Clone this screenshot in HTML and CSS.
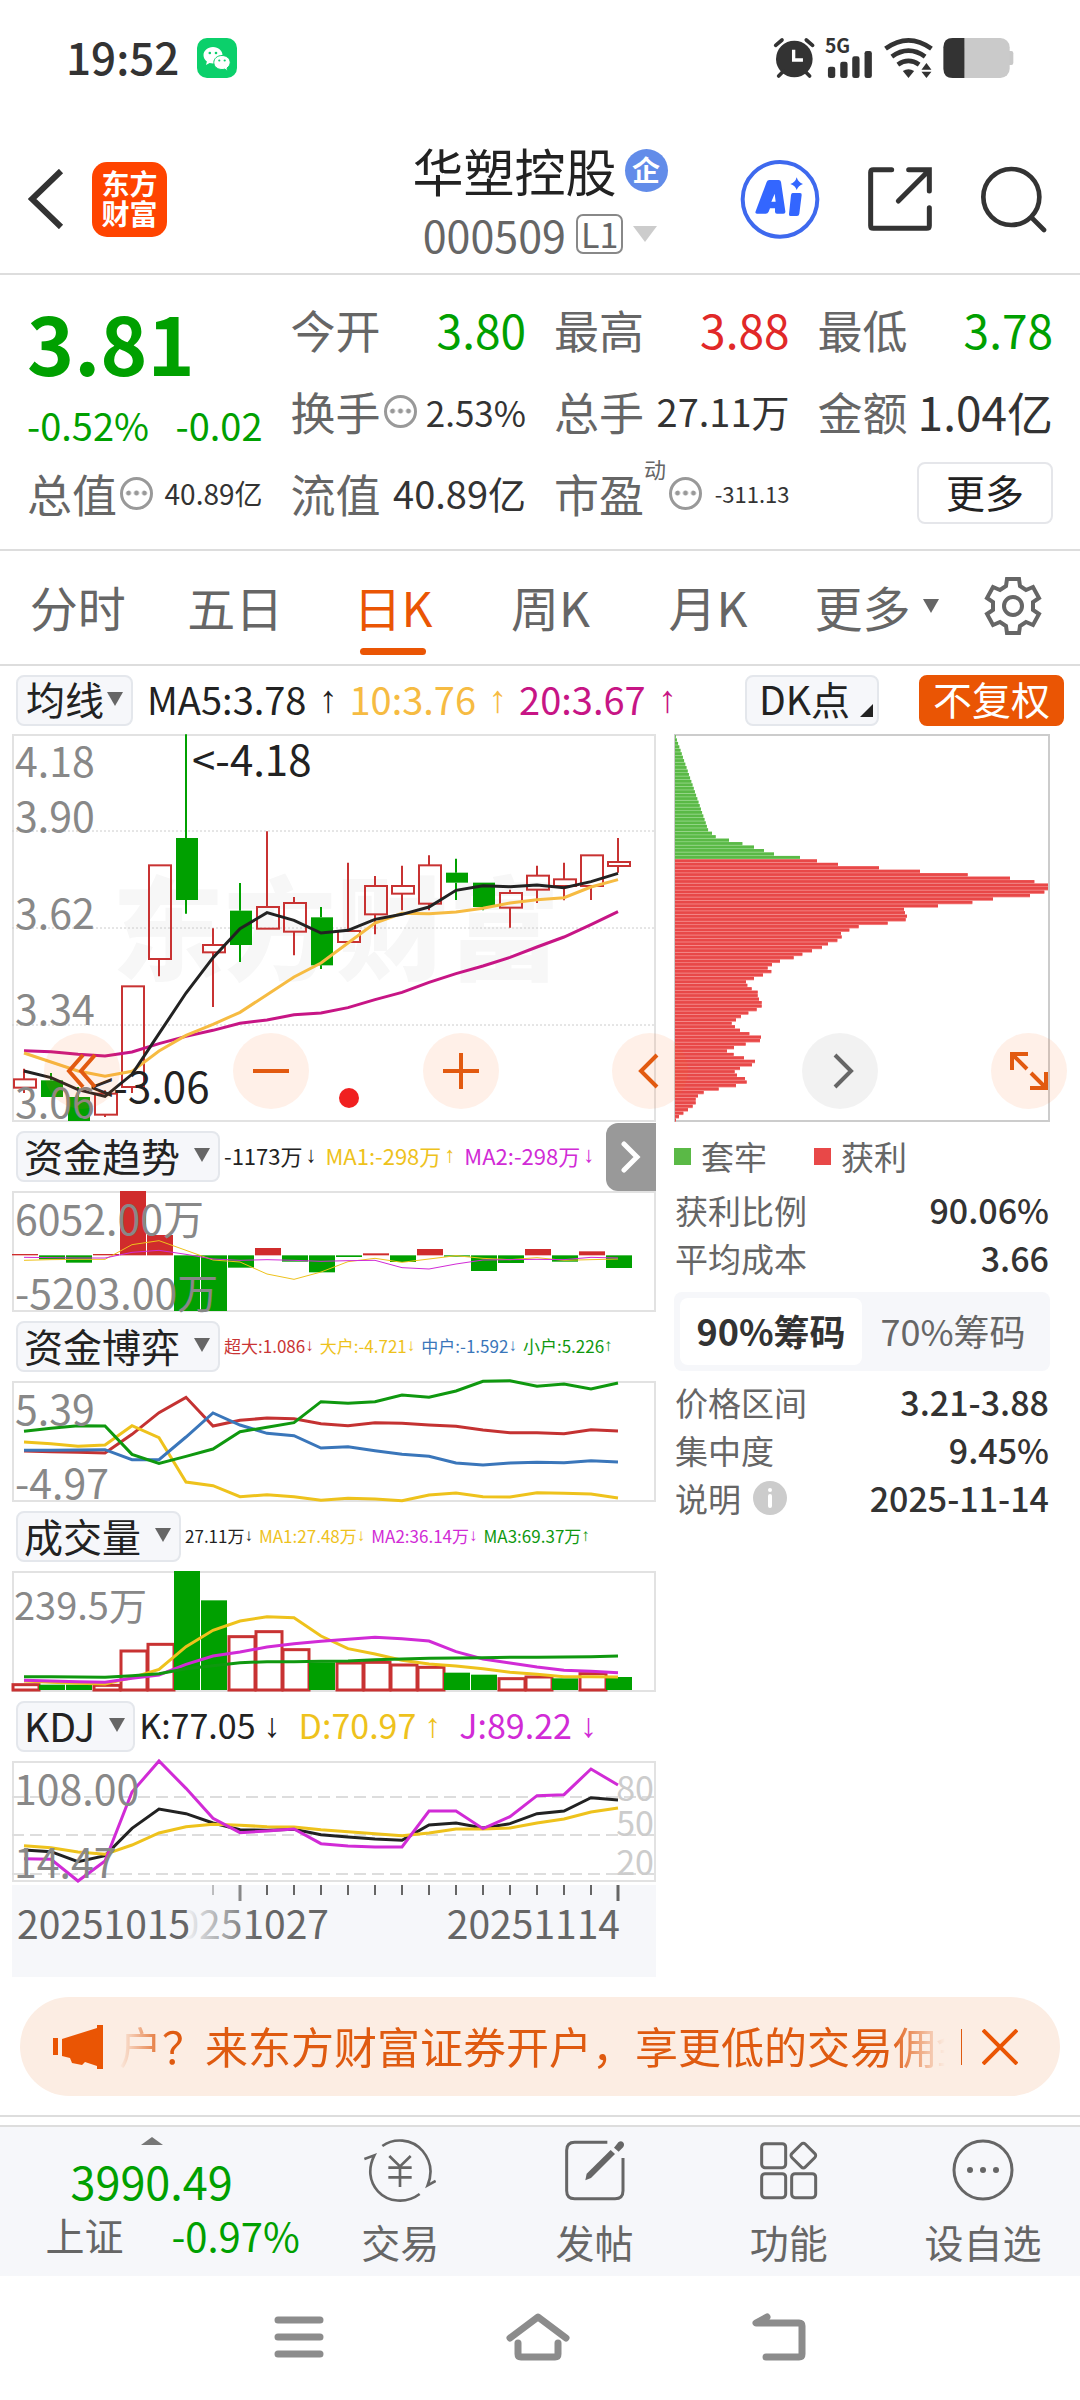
FILE: index.html
```html
<!DOCTYPE html>
<html lang="zh-CN">
<head>
<meta charset="utf-8">
<meta name="viewport" content="width=device-width, initial-scale=1">
<title>华塑控股 000509</title>
<link rel="stylesheet" href="styles.css">
</head>
<body>
<div class="status">
  <time class="clock">19:52</time>
  <svg class="wechat" viewBox="0 0 40 40" aria-hidden="true">
    <rect width="40" height="40" rx="10" fill="#0bd06b"/>
    <path d="M16 9c-5.500 0-9.500 3.700-9.500 8.200 0 2.600 1.300 4.800 3.400 6.300l-.9 3.400 3.600-2c1.100.3 2.200.5 3.400.5 5.400 0 9.500-3.700 9.500-8.200S21.500 9 16 9z" fill="#fff"/>
    <path d="M25 17.500c-4.700 0-8.200 3.100-8.200 7s3.500 7 8.200 7c.9 0 1.800-.1 2.600-.4l3.200 1.800-.8-2.900c1.900-1.300 3.200-3.300 3.200-5.500 0-3.900-3.600-7-8.200-7z" fill="#fff" stroke="#0bd06b"/>
    <g fill="#0bd06b"><circle cx="12.800" cy="15" r="1.300"/><circle cx="19" cy="15" r="1.300"/><circle cx="22.300" cy="22.500" r="1.100"/><circle cx="27.700" cy="22.500" r="1.100"/></g>
  </svg>
  <svg class="signals" viewBox="400 48 724 126" aria-hidden="true">
    <g fill="#333">
      <circle cx="464" cy="114" r="55"/>
      <g stroke="#333" stroke-width="11" stroke-linecap="round"><path d="M408 73l19-16M519 73l-19-16"/><path d="M417 165l14-14M510 165l-14-14"/></g>
      <path d="M462 86v31h28" fill="none" stroke="#fff" stroke-width="10"/>
      <text x="556" y="97" class="net">5G</text>
      <rect x="565" y="137" width="22" height="34" rx="7"/><rect x="602" y="122" width="22" height="49" rx="7"/><rect x="638" y="106" width="22" height="65" rx="7"/><rect x="675" y="90" width="22" height="81" rx="7"/>
      <g fill="none" stroke="#333" stroke-width="14"><path d="M738 83q69-50 138 0"/><path d="M757 107q50-36 100 0"/><path d="M775 131q32-22 64 0"/></g>
      <path d="M790 150q17-11 34 0l-17 21z"/><path d="M846 146l15-20 15 20zM846 152h30l-15 19z"/>
    </g>
    <path d="M1108 90h8q6 0 6 7v28q0 7-6 7h-8z" fill="#c8c8c8"/>
    <rect x="912" y="51" width="199" height="120" rx="28" fill="#cacaca"/>
    <path d="M940 51h35v120h-35q-28 0-28-28V79q0-28 28-28z" fill="#333"/>
  </svg>
</div>

<header class="header">
  <div class="side">
    <button class="bare" aria-label="返回"><svg width="36" height="60" viewBox="0 0 36 60"><path d="M33 2L4 30l29 28" fill="none" stroke="#333" stroke-width="6"/></svg></button>
    <a class="logo" href="#">东方<br>财富</a>
  </div>
  <div class="heading">
    <h1>华塑控股<span class="badge">企</span></h1>
    <p>000509<span class="level">L1</span><svg width="24" height="16" viewBox="0 0 24 16"><path d="M0 0h24L12 16z" fill="#ccc"/></svg></p>
  </div>
  <div class="side actions">
    <button class="bare" aria-label="Ai"><svg width="80" height="80" viewBox="300 416 240 240">
      <circle cx="420" cy="537" r="112" fill="none" stroke="#3e69ee" stroke-width="12"/>
      <path d="M380 485q2-6 8-6h28q6 0 7 6l13 88q1 7-6 7h-19q-6 0-6-6v-10h-15l-4 10q-3 6-9 6h-26q-7 0-4-7zM394 544h13l-3-24z" fill="#3366ff" fill-rule="evenodd"/>
      <path d="M458 518h22q6 0 5 6l-7 56q-1 7-7 7h-20q-5 0-4-6l6-57q1-6 5-6zM470 471q5 16 19 20-14 5-19 18-4-13-19-18 15-4 19-20z" fill="#3366ff"/>
    </svg></button>
    <button class="bare" aria-label="分享"><svg width="66" height="66" viewBox="678 438 198 198" fill="none" stroke="#333" stroke-width="15" stroke-linecap="round"><path d="M752 449h-55q-8 0-8 8v160q0 8 8 8h160q8 0 8-8v-54"/><path d="M803 449h62v64M772 543l90-90"/></svg></button>
    <button class="bare" aria-label="搜索"><svg width="67" height="67" viewBox="1022 434 201 201" fill="none" stroke="#333" stroke-width="14" stroke-linecap="round"><circle cx="1116" cy="527" r="84"/><path d="M1178 590l36 36"/></svg></button>
  </div>
</header>

<section class="quote">
  <div class="price">
    <strong>3.81</strong>
    <div class="change"><span>-0.52%</span><span>-0.02</span></div>
  </div>
  <div class="item"><span>今开</span><b class="xl down">3.80</b></div>
  <div class="item"><span>最高</span><b class="xl up">3.88</b></div>
  <div class="item"><span>最低</span><b class="xl down">3.78</b></div>
  <div class="item"><span>换手<i class="dots"></i></span><b class="md">2.53%</b></div>
  <div class="item"><span>总手</span><b class="lg">27.11万</b></div>
  <div class="item"><span>金额</span><b class="xl">1.04亿</b></div>
  <div class="item"><span>总值<i class="dots"></i></span><b class="sm">40.89亿</b></div>
  <div class="item"><span>流值</span><b class="lg">40.89亿</b></div>
  <div class="item"><span>市盈<sup>动</sup><i class="dots"></i></span><b class="xs">-311.13</b></div>
  <div class="item end"><button class="more">更多</button></div>
</section>

<nav class="tabs">
  <button>分时</button><button>五日</button><button class="on">日K</button><button>周K</button><button>月K</button>
  <button>更多<svg width="16" height="14" viewBox="0 0 16 14"><path d="M0 0h16L8 14z" fill="#666"/></svg></button>
  <button class="gear" aria-label="设置"><svg width="60" height="60" viewBox="-30 -30 60 60" fill="none" stroke="#666" stroke-width="4"><path d="M-6-27H6L7-20 13-16 20-19 26-8 20-4V4L26 8 20 19 13 16 7 20 6 27H-6L-7 20-13 16-20 19-26 8-20 4V-4L-26-8-20-19-13-16-7-20z"/><circle r="9"/></svg></button>
</nav>

<section class="indicators">
  <button class="chip tight">均线<svg width="16" height="14" viewBox="0 0 16 14"><path d="M0 0h16L8 14z" fill="#666"/></svg></button>
  <div class="ma"><span>MA5:3.78<i>↑</i></span><span class="c-amber">10:3.76<i>↑</i></span><span class="c-rose">20:3.67<i>↑</i></span></div>
  <button class="chip dk">DK点<svg width="13" height="13" viewBox="0 0 13 13"><path d="M13 0v13H0z" fill="#222"/></svg></button>
  <button class="chip solid">不复权</button>
</section>

<main class="charts">
  <div class="left">
    <svg id="kline" class="plot" viewBox="0 0 644 388"></svg>
    <div class="sub"><button class="chip">资金趋势<svg width="16" height="14" viewBox="0 0 16 14"><path d="M0 0h16L8 14z" fill="#666"/></svg></button>
      <div class="vals v-trend"><span>-1173万<i>↓</i></span><span class="c-gold">MA1:-298万<i>↑</i></span><span class="c-pink">MA2:-298万<i>↓</i></span></div>
      <button class="next" aria-label="下一组"><svg width="20" height="32" viewBox="0 0 20 32"><path d="M3 3l13 13L3 29" fill="none" stroke="#fff" stroke-width="5" stroke-linecap="round"/></svg></button></div>
    <svg id="trend" class="plot" viewBox="0 0 644 121"></svg>
    <div class="sub"><button class="chip">资金博弈<svg width="16" height="14" viewBox="0 0 16 14"><path d="M0 0h16L8 14z" fill="#666"/></svg></button>
      <div class="vals v-small"><span class="c-red">超大:1.086<i>↓</i></span><span class="c-gold">大户:-4.721<i>↓</i></span><span class="c-blue">中户:-1.592<i>↓</i></span><span class="c-green">小户:5.226<i>↑</i></span></div></div>
    <svg id="game" class="plot" viewBox="0 0 644 121"></svg>
    <div class="sub"><button class="chip">成交量<svg width="16" height="14" viewBox="0 0 16 14"><path d="M0 0h16L8 14z" fill="#666"/></svg></button>
      <div class="vals v-small"><span>27.11万<i>↓</i></span><span class="c-gold">MA1:27.48万<i>↓</i></span><span class="c-pink">MA2:36.14万<i>↓</i></span><span class="c-green">MA3:69.37万<i>↑</i></span></div></div>
    <svg id="volume" class="plot" viewBox="0 0 644 121"></svg>
    <div class="sub"><button class="chip">KDJ<svg width="16" height="14" viewBox="0 0 16 14"><path d="M0 0h16L8 14z" fill="#666"/></svg></button>
      <div class="vals v-kdj"><span>K:77.05<i>↓</i></span><span class="c-gold">D:70.97<i>↑</i></span><span class="c-pink">J:89.22<i>↓</i></span></div></div>
    <svg id="kdj" class="plot" viewBox="0 0 644 121"></svg>
    <svg id="axis" class="plot axis" viewBox="0 0 644 92"></svg>
  </div>

  <aside class="right">
    <svg id="chips" class="plot" viewBox="0 0 376 388"></svg>
    <div class="legend"><span class="key k-green">套牢</span><span class="key k-red">获利</span></div>
    <dl class="facts"><div><dt>获利比例</dt><dd>90.06%</dd></div><div><dt>平均成本</dt><dd>3.66</dd></div></dl>
    <div class="toggle"><button class="on">90%筹码</button><button>70%筹码</button></div>
    <dl class="facts"><div><dt>价格区间</dt><dd>3.21-3.88</dd></div><div><dt>集中度</dt><dd>9.45%</dd></div>
      <div><dt>说明<svg width="34" height="34" viewBox="0 0 34 34"><circle cx="17" cy="17" r="17" fill="#ccc"/><path d="M17 15v10" stroke="#fff" stroke-width="4" stroke-linecap="round"/><circle cx="17" cy="9" r="2" fill="#fff"/></svg></dt><dd>2025-11-14</dd></div></dl>
  </aside>

  <div class="tools">
    <button aria-label="快退"><svg width="34" height="36" viewBox="0 0 34 36"><path d="M18 2L4 18l14 16M30 2L16 18l14 16"/></svg></button>
    <button aria-label="缩小"><svg width="38" height="38" viewBox="0 0 38 38"><path d="M1 19h36"/></svg></button>
    <button aria-label="放大"><svg width="38" height="38" viewBox="0 0 38 38"><path d="M1 19h36M19 1v36"/></svg></button>
    <button aria-label="左移"><svg width="34" height="36" viewBox="0 0 34 36"><path d="M24 2L8 18l16 16"/></svg></button>
    <button class="grey" aria-label="右移"><svg width="34" height="36" viewBox="0 0 34 36"><path d="M12 2l16 16-16 16"/></svg></button>
    <button aria-label="全屏"><svg width="38" height="38" viewBox="0 0 38 38"><path d="M2 18V2h16M3 3l14 14M36 20v16H20M35 35L21 21"/></svg></button>
  </div>
</main>

<section class="notice">
  <svg width="50" height="44" viewBox="0 0 50 44" fill="#ea5504"><path d="M0 13h5v17H0zM9 14L44 3V0h6v44h-6v-3l-12-4-3 3-10-2-2-5-8-2z"/></svg>
  <p>户？来东方财富证券开户，享更低的交易佣金</p>
  <button class="bare close" aria-label="关闭"><svg width="36" height="36" viewBox="0 0 36 36"><path d="M1 1l34 34M35 1L1 35" stroke="#ea5504" stroke-width="4"/></svg></button>
</section>

<nav class="dock">
  <a class="index" href="#"><svg width="22" height="8" viewBox="0 0 22 8"><path d="M11 0l11 8H0z" fill="#777"/></svg><b>3990.49</b><span><em>上证</em>-0.97%</span></a>
  <a href="#"><svg viewBox="72 42 216 198" width="72" height="66" fill="none" stroke="#666" stroke-width="8"><path d="M127 69C160 45 215 45 248 84c25 30 30 65 15 103l24-13M239 213c-40 30-95 25-125-8C87 175 84 135 103 97l-30 11"/><path d="M148 99l32 31 32-31M145 134h70M145 163h70M180 130v62"/></svg>交易</a>
  <a href="#"><svg viewBox="666 42 198 198" width="66" height="66" fill="none" stroke="#666" stroke-width="9"><path d="M802 58H704q-24 0-24 24v121q0 24 24 24h121q24 0 24-24v-98"/><path d="M736 172l4-20 72-71 13 12-72 72z" fill="#666" stroke="none"/><path d="M822 74l13-16q10-7 16 2 3 6-1 12l-14 14z" fill="#666" stroke="none"/></svg>发帖</a>
  <a href="#"><svg viewBox="1248 42 198 198" width="66" height="66" fill="none" stroke="#666" stroke-width="9"><rect x="1265" y="62" width="72" height="72" rx="10"/><rect x="1265" y="152" width="72" height="72" rx="10"/><rect x="1355" y="152" width="72" height="72" rx="10"/><rect x="1362" y="69" width="57" height="57" rx="8" transform="rotate(45 1390 97)"/></svg>功能</a>
  <a href="#"><svg viewBox="0 0 66 66" width="66" height="66"><circle cx="33" cy="33" r="29" fill="none" stroke="#666" stroke-width="3"/><g fill="#666"><circle cx="20" cy="33" r="3"/><circle cx="33" cy="33" r="3"/><circle cx="46" cy="33" r="3"/></g></svg>设自选</a>
</nav>

<nav class="system">
  <button class="bare" aria-label="菜单"><svg width="50" height="50" viewBox="0 0 50 50"><path d="M4 8h42M4 25h42M4 42h42" stroke="#8c8c8c" stroke-width="7" stroke-linecap="round"/></svg></button>
  <button class="bare" aria-label="主页"><svg width="64" height="50" viewBox="0 0 64 50" fill="none" stroke="#8c8c8c" stroke-width="7" stroke-linecap="round" stroke-linejoin="round"><path d="M4 26L32 5l28 21M12 31v11q0 3 3 3h34q3 0 3-3V31"/></svg></button>
  <button class="bare" aria-label="后退"><svg width="54" height="50" viewBox="0 0 54 50" fill="none" stroke="#8c8c8c" stroke-width="7" stroke-linecap="round" stroke-linejoin="round"><path d="M15 5L4 11h43q3 0 3 3v28q0 3-3 3H14"/></svg></button>
</nav>
<script src="charts.js"></script>
</body>
</html>
```

FILE: styles.css
```css
* { box-sizing: border-box; }

body {
  margin: 0;
  background: #fff;
  color: #222;
  font-family: "Noto Sans CJK SC", "Noto Sans", sans-serif;
  font-size: 39px;
  line-height: 1;
}

button { border: 0; padding: 0; margin: 0; background: none; font: inherit; color: inherit; }
h1, p, dl, dd { margin: 0; }
svg { display: block; flex: none; }
a { color: inherit; text-decoration: none; }
i, em { font-style: normal; }
.bare { display: block; }

/* status bar */
.status { display: flex; align-items: center; height: 115px; padding: 0 66px; }
.clock { padding-bottom: 3px; font-size: 44px; font-weight: 500; color: #333; }
.wechat { width: 40px; height: 40px; margin-left: 18px; }
.signals { width: 241px; height: 42px; margin-left: auto; overflow: visible; }
.net { font-size: 58px; font-weight: 700; }

/* header */
.header { display: grid; grid-template-columns: 1fr auto 1fr; align-items: center; border-bottom: 2px solid #ddd; }
.side { display: flex; align-items: center; padding: 10px 33px 0 28px; gap: 28px; }
.actions { justify-content: flex-end; gap: 47px; }
.logo { width: 75px; height: 75px; padding-top: 6px; border-radius: 15px; background: #ff4400; color: #fff; font-size: 28px; font-weight: 700; line-height: 30px; text-align: center; }
.heading { padding: 23px 0 7px; text-align: center; }
.heading h1, .heading p { display: flex; align-items: center; justify-content: center; height: 64px; }
.heading h1 { font-size: 51px; font-weight: 400; gap: 8px; }
.badge { width: 43px; height: 43px; border-radius: 50%; background: #628ce9; color: #fff; font-size: 28px; font-weight: 700; line-height: 41px; text-align: center; }
.heading p { font-size: 43px; color: #666; gap: 10px; }
.level { height: 40px; padding: 0 3px; border: 2px solid #888; border-radius: 7px; font-size: 34px; line-height: 36px; }

/* quote */
.quote { display: grid; grid-template-columns: repeat(4, 1fr); grid-auto-rows: 82px; column-gap: 28px; padding: 13px 27px 15px; border-bottom: 2px solid #ddd; }
.price { grid-row: span 2; color: #00a000; }
.price strong { display: block; padding-top: 13px; font-size: 80px; font-weight: 700; line-height: 80px; }
.change { display: flex; justify-content: space-between; padding-top: 25px; font-size: 38px; }
.item { display: flex; align-items: center; justify-content: space-between; white-space: nowrap; }
.item span { display: flex; align-items: center; color: #666; font-size: 45px; }
.item b { color: #333; font-weight: 400; }
.item sup { align-self: flex-start; margin-top: -14px; font-size: 22px; line-height: 22px; }
.item .xl { font-size: 46px; }
.item .lg { font-size: 38px; }
.item .md { font-size: 35px; }
.item .sm { font-size: 28px; }
.item .xs { font-size: 22px; }
.item .down { color: #00a000; }
.item .up { color: #e12828; }
.end { justify-content: flex-end; }
.dots { width: 33px; height: 33px; margin-left: 3px; border: 3px solid #999; border-radius: 50%; background: radial-gradient(circle, #999 2px, transparent 3px) center / 8px 8px content-box repeat-x; padding: 9px 2px; }
.more { width: 136px; height: 62px; padding-bottom: 4px; border: 2px solid #e5e6ea; border-radius: 8px; color: #222; font-size: 39px; }

/* period tabs */
.tabs { display: grid; grid-template-columns: repeat(5, 158fr) 180fr 113fr; height: 115px; border-bottom: 2px solid #ddd; color: #666; font-size: 48px; }
.tabs button { position: relative; display: flex; align-items: center; justify-content: center; gap: 12px; padding: 0 2px 3px 0; }
.tabs .on { color: #ea5504; }
.tabs .on::after { content: ""; position: absolute; bottom: 9px; left: calc(50% - 34px); width: 66px; height: 7px; border-radius: 4px; background: #ea5504; }
.tabs .gear { justify-content: flex-start; padding-left: 16px; }

/* indicator row */
.indicators { display: flex; align-items: center; height: 68px; padding: 0 16px; }
.chip { display: flex; align-items: center; height: 51px; padding: 0 8px 3px 6px; gap: 14px; border: 2px solid #e4e7ec; border-radius: 8px; background: #f6f7fa; white-space: nowrap; }
.tight { padding: 0 8px 3px; gap: 3px; }
.ma { display: flex; gap: 12px; margin-left: 14px; padding-bottom: 3px; font-size: 38px; }
.ma span, .vals span { display: flex; align-items: center; white-space: nowrap; }
.ma i, .vals i { font-family: "Liberation Sans", sans-serif; }
.ma i { margin-left: 12px; }
.dk { margin-left: auto; padding: 0 4px 3px 12px; gap: 10px; }
.dk svg { margin-top: 24px; }
.solid { margin-left: 40px; padding: 0 12px 3px; border-color: #ea5504; background: #ea5504; color: #fff; }

.c-amber { color: #f6bb42; }
.c-rose { color: #c71585; }
.c-gold { color: #eec21c; }
.c-pink { color: #d12bd6; }
.c-red { color: #c93434; }
.c-blue { color: #3a76ba; }
.c-green { color: #0f980f; }

/* charts */
.charts { position: relative; display: grid; grid-template-columns: minmax(0, 644fr) minmax(0, 376fr); column-gap: 18px; padding: 0 30px 0 12px; }
.plot { width: 100%; height: auto; overflow: visible; }
.axis { margin-top: 3px; background: #f6f7fa; }
.label { font-size: 41px; fill: #888; }
.narrow-label { font-size: 38px; fill: #888; }
.mark { font-size: 42px; fill: #222; }
.level-label { font-size: 34px; fill: #ccc; }
.date { font-size: 39px; fill: #666; }
.watermark { font-size: 112px; font-weight: 900; fill: #f7f7f7; }

.sub { display: flex; align-items: center; height: 69px; padding-left: 4px; }
.vals { display: flex; margin-left: 4px; padding-bottom: 3px; }
.v-trend { font-size: 22px; gap: 9px; }
.v-trend i { margin-left: 3px; }
.v-small { font-size: 17px; gap: 6px; }
.v-kdj { font-size: 34px; gap: 18px; }
.v-kdj i { margin-left: 8px; }
.next { display: flex; align-items: center; justify-content: center; width: 50px; height: 68px; margin-left: auto; border-radius: 12px 0 0 12px; background: #999; }

.legend { display: flex; gap: 47px; height: 69px; align-items: center; color: #666; font-size: 33px; }
.key { display: flex; align-items: center; gap: 10px; }
.key::before { content: ""; width: 17px; height: 17px; }
.k-green::before { background: #5ab946; }
.k-red::before { background: #e84848; }
.facts { font-size: 33px; padding: 0 1px; }
.facts div { display: flex; align-items: center; justify-content: space-between; height: 48px; }
.facts dt { display: flex; align-items: center; gap: 12px; color: #666; }
.facts dd { color: #333; font-size: 34px; font-weight: 500; }
.legend + .facts { margin-top: -5px; }
.toggle { display: grid; grid-template-columns: 1fr 1fr; height: 79px; margin: 10px 0 7px; padding: 6px; border-radius: 8px; background: #f6f7fa; color: #666; font-size: 36px; }
.toggle button { padding-bottom: 4px; }
.toggle .on { border-radius: 8px; background: #fff; color: #333; font-weight: 700; }

.tools { position: absolute; top: 299px; left: 44px; right: 13px; display: flex; justify-content: space-between; }
.tools button { display: flex; align-items: center; justify-content: center; width: 76px; height: 76px; border-radius: 50%; background: rgba(252, 110, 30, 0.1); }
.tools svg { fill: none; stroke: #e25a10; stroke-width: 4; }
.tools .grey { background: rgba(0, 0, 0, 0.05); }
.tools .grey svg { stroke: #666; }

/* notice */
.notice { display: flex; align-items: center; height: 99px; margin: 20px 20px 19px; padding: 0 42px 0 33px; border-radius: 50px; background: #fcede3; color: #df5a10; }
.notice p { flex: 1; min-width: 0; margin-left: 16px; padding-bottom: 4px; overflow: hidden; font-size: 43px; line-height: 60px; white-space: nowrap; -webkit-mask-image: linear-gradient(90deg, transparent, #000 50px, #000 calc(100% - 55px), transparent); mask-image: linear-gradient(90deg, transparent, #000 50px, #000 calc(100% - 55px), transparent); }
.close { margin-left: 16px; padding-left: 20px; border-left: 1px solid #df5a10; }

/* bottom bar */
.dock { display: grid; grid-template-columns: 303fr repeat(4, 194fr); height: 161px; border-top: 2px solid #ddd; padding-top: 10px; background: linear-gradient(#fff 8px, #ddd 8px, #ddd 10px, #f6f7fa 10px); color: #666; }
.dock a { display: flex; flex-direction: column; align-items: center; gap: 19px; padding-top: 10px; font-size: 39px; }
.dock .index { gap: 0; color: #00a000; }
.index b { margin-top: 13px; font-size: 45px; font-weight: 400; }
.index span { display: flex; gap: 48px; margin-top: 12px; padding-left: 42px; font-size: 40px; }
.index em { color: #666; font-size: 39px; }

.system { display: flex; align-items: center; justify-content: center; gap: 182px; height: 122px; }
```

FILE: charts.js
```js
// Series hold screen rows in thirds of a pixel, counted down from each panel's origin.
const STEP = 27;
const RED = '#c83232';
const GREEN = '#00a000';
const x = i => 12 + STEP * i;

function add(svg, tag, attrs, text) {
  const el = document.createElementNS('http://www.w3.org/2000/svg', tag);
  for (const key in attrs) el.setAttribute(key, attrs[key]);
  if (text) el.textContent = text;
  svg.appendChild(el);
  return el;
}

function frame(svg, w, h, color) {
  add(svg, 'rect', { x: 1, y: 1, width: w - 2, height: h - 2, fill: 'none', stroke: color || '#e2e2e2', 'stroke-width': 2 });
}

function line(svg, rows, origin, color, width) {
  const points = rows.map((v, i) => x(i) + ',' + (v - origin) / 3).join(' ');
  add(svg, 'polyline', { points, fill: 'none', stroke: color, 'stroke-width': width });
}

function label(svg, cls, px, py, text, anchor) {
  add(svg, 'text', { class: cls, x: px, y: py, 'text-anchor': anchor || 'start' }, text);
}

// Candles: colour, high, body top, body bottom, low
const candles = [
  ['r', 1045, 1077, 1102, 1118], ['g', 1058, 1080, 1130, 1130], ['g', 1100, 1130, 1202, 1202],
  ['r', 1110, 1120, 1183, 1190], ['r', 798, 798, 1100, 1118], ['r', 435, 435, 716, 768],
  ['g', 42, 353, 539, 580], ['r', 624, 674, 696, 860], ['g', 488, 571, 674, 725],
  ['r', 333, 560, 625, 625], ['r', 530, 548, 634, 705], ['g', 560, 591, 735, 746],
  ['r', 427, 632, 665, 665], ['r', 467, 497, 582, 642], ['r', 436, 497, 520, 570],
  ['r', 405, 435, 550, 570], ['g', 415, 457, 487, 539], ['g', 487, 487, 560, 570],
  ['r', 508, 518, 562, 622], ['r', 436, 466, 508, 548], ['r', 427, 477, 497, 540],
  ['r', 405, 405, 497, 539], ['r', 353, 425, 437, 457]
];

function drawKline() {
  const svg = document.getElementById('kline');
  const y = v => (v - 41) / 3;
  frame(svg, 644, 388);
  label(svg, 'watermark', 100, 238, '东方财富');
  [97, 194, 291].forEach(gy => add(svg, 'path', { d: `M0 ${gy}H644`, stroke: '#ccc', 'stroke-dasharray': '2 2' }));
  candles.forEach(([kind, high, top, bottom, low], i) => {
    const color = kind === 'r' ? RED : GREEN;
    add(svg, 'path', { d: `M${x(i)} ${y(high)}V${y(top)}M${x(i)} ${y(bottom)}V${y(low)}`, stroke: color, 'stroke-width': 2 });
    add(svg, 'rect', {
      x: x(i) - 10, y: y(top), width: 22, height: y(bottom) - y(top),
      fill: kind === 'r' ? 'none' : GREEN, stroke: kind === 'r' ? RED : 'none', 'stroke-width': 2
    });
  });
  line(svg, [991, 994, 1002, 1007, 995, 970, 948, 930, 909, 899, 883, 878, 862, 838, 816, 786, 760, 737, 711, 680, 650, 613, 574], 41, '#c71585', 3);
  line(svg, [998, 1025, 1052, 1068, 1053, 992, 945, 912, 876, 823, 770, 728, 668, 608, 579, 580, 575, 564, 548, 538, 532, 500, 478], 41, '#f6bb42', 3);
  line(svg, [1052, 1072, 1108, 1128, 1062, 940, 818, 712, 625, 577, 600, 638, 630, 597, 582, 560, 510, 496, 499, 494, 502, 484, 459], 41, '#222', 3);
  label(svg, 'label', 3, 43, '4.18');
  label(svg, 'label', 3, 98, '3.90');
  label(svg, 'label', 3, 195, '3.62');
  label(svg, 'label', 3, 291, '3.34');
  label(svg, 'label', 3, 384, '3.06');
  label(svg, 'mark', 180, 42, '<-4.18');
  label(svg, 'mark', 78, 369, '<-3.06');
  add(svg, 'circle', { cx: 337, cy: 364, r: 10, fill: '#f02020' });
}

function drawTrend() {
  const svg = document.getElementById('trend');
  frame(svg, 644, 121);
  const ends = [399, 415, 425, 399, 210, 342, 570, 570, 440, 381, 422, 454, 408, 397, 423, 384, 407, 450, 426, 384, 422, 391, 441];
  ends.forEach((v, i) => add(svg, 'rect', {
    x: x(i) - 12, y: (Math.min(v, 403) - 210) / 3, width: 26, height: Math.abs(v - 403) / 3,
    fill: v < 403 ? '#d02c2c' : GREEN
  }));
  line(svg, [418, 416, 415, 415, 371, 359, 388, 417, 423, 459, 475, 453, 422, 412, 424, 414, 404, 412, 416, 410, 418, 416, 414], 210, '#eec21c', 1);
  line(svg, [409, 410, 411, 411, 394, 388, 400, 414, 418, 416, 418, 421, 419, 418, 440, 444, 429, 417, 416, 415, 416, 409, 411], 210, '#d12bd6', 1);
  label(svg, 'label', 3, 44, '6052.00万');
  label(svg, 'label', 3, 118, '-5203.00万');
}

function drawGame() {
  const svg = document.getElementById('game');
  frame(svg, 644, 121);
  line(svg, [990, 992, 994, 996, 940, 875, 829, 915, 898, 891, 893, 908, 914, 905, 907, 912, 916, 927, 935, 935, 938, 926, 930], 780, '#c43232', 3);
  line(svg, [963, 968, 976, 972, 914, 950, 1083, 1094, 1127, 1121, 1127, 1138, 1132, 1134, 1139, 1122, 1116, 1127, 1128, 1115, 1117, 1119, 1131], 780, '#eec21c', 3);
  line(svg, [988, 988, 987, 986, 1016, 1016, 948, 876, 912, 937, 944, 981, 977, 989, 1000, 1006, 1026, 1032, 1026, 1024, 1025, 1019, 1023], 780, '#3a76ba', 3);
  line(svg, [931, 922, 914, 915, 1000, 1027, 1006, 984, 932, 919, 905, 842, 847, 842, 822, 829, 810, 781, 779, 796, 789, 804, 786], 780, '#0f980f', 3);
  label(svg, 'label', 3, 44, '5.39');
  label(svg, 'label', 3, 118, '-4.97');
}

function drawVolume() {
  const svg = document.getElementById('volume');
  frame(svg, 644, 121);
  const tops = [551, 551, 551, 553, 450, 430, 210, 298, 407, 392, 446, 484, 486, 484, 492, 499, 515, 521, 533, 528, 532, 518, 528];
  const kinds = 'rggrrrggrrrgrrrrggrrgrg';
  tops.forEach((v, i) => {
    const rise = kinds[i] === 'r';
    add(svg, 'rect', {
      x: x(i) - (rise ? 11 : 12), y: (v - 210) / 3, width: 26, height: (567 - v) / 3,
      fill: rise ? '#fff' : GREEN, stroke: rise ? RED : 'none', 'stroke-width': 3
    });
  });
  line(svg, [540, 544, 547, 549, 530, 505, 437, 388, 360, 347, 350, 405, 443, 459, 478, 489, 495, 503, 514, 520, 527, 527, 528], 210, '#eec21c', 3);
  line(svg, [538, 540, 542, 544, 532, 522, 490, 465, 453, 438, 428, 421, 415, 409, 413, 420, 452, 474, 486, 498, 508, 511, 515], 210, '#d12bd6', 3);
  line(svg, [527, 527, 528, 529, 524, 518, 503, 494, 485, 482, 482, 481, 480, 476, 474, 472, 471, 470, 469, 469, 468, 467, 465], 210, '#0f980f', 3);
  label(svg, 'narrow-label', 2, 49, '239.5万');
}

function drawKdj() {
  const svg = document.getElementById('kdj');
  frame(svg, 644, 121);
  [36, 74, 113].forEach(gy => add(svg, 'path', { d: `M0 ${gy}H644`, stroke: '#ddd', 'stroke-width': 2, 'stroke-dasharray': '12 6' }));
  label(svg, 'level-label', 642, 40, '80', 'end');
  label(svg, 'level-label', 642, 75, '50', 'end');
  label(svg, 'level-label', 642, 114, '20', 'end');
  line(svg, [1047, 1052, 1082, 1064, 982, 924, 938, 966, 986, 988, 985, 1001, 1008, 1014, 1018, 972, 966, 981, 968, 938, 930, 890, 897], 780, '#222', 3);
  line(svg, [1034, 1040, 1053, 1060, 1032, 996, 977, 970, 973, 977, 978, 986, 992, 998, 1004, 996, 984, 984, 981, 966, 954, 933, 921], 780, '#eec21c', 3);
  line(svg, [1073, 1075, 1140, 1080, 873, 780, 862, 952, 995, 990, 984, 1028, 1035, 1038, 1038, 930, 930, 983, 947, 884, 881, 804, 852], 780, '#d12bd6', 3);
  label(svg, 'label', 2, 44, '108.00');
  label(svg, 'label', 2, 117, '14.47');
}

function drawAxis() {
  const svg = document.getElementById('axis');
  for (let i = 7; i < 23; i++) {
    const major = i === 8 || i === 22;
    add(svg, 'path', { d: `M${x(i)} 0V${major ? 16 : 10}`, stroke: '#666', 'stroke-width': major ? 3 : 2 });
  }
  label(svg, 'date', 317, 54, '20251027', 'end');
  const fade = add(svg, 'linearGradient', { id: 'fade' });
  add(fade, 'stop', { offset: 0.3, 'stop-color': '#f6f7fa' });
  add(fade, 'stop', { offset: 1, 'stop-color': '#f6f7fa', 'stop-opacity': 0 });
  add(svg, 'rect', { x: 140, y: 0, width: 105, height: 92, fill: 'url(#fade)' });
  label(svg, 'date', 5, 54, '20251015');
  label(svg, 'date', 608, 54, '20251114', 'end');
}

function drawChips() {
  const svg = document.getElementById('chips');
  frame(svg, 376, 388, '#ccc');
  const held = [];
  for (let i = 0; i < 28; i++) held.push(2 + i * 3.6);
  held.push(111, 122, 162, 202, 237, 267, 297, 375);
  const gain = [426, 489, 612, 735, 878, 1005, 1078, 1119, 1119, 1108, 1065, 954, 892, 789, 687, 690, 696, 692, 638, 551,
    523, 498, 500, 487, 459, 441, 411, 382, 356, 315, 291, 278, 289, 264, 237, 213, 217, 230, 248, 248, 252, 260, 260, 245,
    220, 198, 183, 170, 180, 195, 223, 258, 255, 212, 177, 156, 176, 207, 240, 231, 195, 179, 186, 210, 215, 183, 131, 86,
    69, 62, 62, 53, 39, 25, 12, 3];
  const pitch = 387 / (held.length + gain.length);
  held.concat(gain).forEach((w, i) => {
    const green = i < held.length;
    add(svg, 'rect', { x: 1, y: 1 + i * pitch, width: w / 3, height: pitch, fill: green ? '#96d889' : '#f58a8a' });
    add(svg, 'rect', { x: 1, y: 1 + i * pitch, width: w / 3, height: 2.7, fill: green ? '#5ab946' : '#e84848' });
  });
}

drawKline();
drawTrend();
drawGame();
drawVolume();
drawKdj();
drawAxis();
drawChips();
```
